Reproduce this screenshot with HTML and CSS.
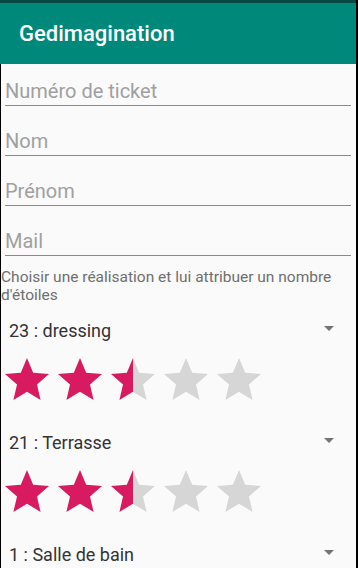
FILE: index.html
```html
<!DOCTYPE html>
<html lang="fr">
<head>
  <meta charset="UTF-8">
  <meta name="viewport" content="width=device-width, initial-scale=1.0">
  <title>Gedimagination</title>
  <link rel="stylesheet" href="styles.css">
</head>
<body>

  <div class="app">
    <!-- Barre du haut -->
    <div class="toolbar">
      <h1>Gedimagination</h1>
    </div>

    <div class="content">
      <!-- Champs du formulaire -->
      <input class="field" type="text" placeholder="Numéro de ticket">
      <input class="field" type="text" placeholder="Nom">
      <input class="field" type="text" placeholder="Prénom">
      <input class="field" type="email" placeholder="Mail">

      <p class="caption">Choisir une réalisation et lui attribuer un nombre d'étoiles</p>

      <svg width="0" height="0" class="defs">
        <defs>
          <linearGradient id="half">
            <stop offset="50%" stop-color="#d81b60"/>
            <stop offset="50%" stop-color="#d6d6d6"/>
          </linearGradient>
          <path id="star" d="M12 17.27L18.18 21l-1.64-7.03L22 9.24l-7.19-.61L12 2 9.19 8.63 2 9.24l5.46 4.73L5.82 21z"/>
        </defs>
      </svg>

      <!-- Réalisation 1 -->
      <div class="spinner">
        <span>23 : dressing</span>
        <span class="arrow"></span>
      </div>
      <div class="rating">
        <svg viewBox="2 2 20 19" class="on"><use href="#star"/></svg>
        <svg viewBox="2 2 20 19" class="on"><use href="#star"/></svg>
        <svg viewBox="2 2 20 19" class="half"><use href="#star"/></svg>
        <svg viewBox="2 2 20 19"><use href="#star"/></svg>
        <svg viewBox="2 2 20 19"><use href="#star"/></svg>
      </div>

      <!-- Réalisation 2 -->
      <div class="spinner">
        <span>21 : Terrasse</span>
        <span class="arrow"></span>
      </div>
      <div class="rating">
        <svg viewBox="2 2 20 19" class="on"><use href="#star"/></svg>
        <svg viewBox="2 2 20 19" class="on"><use href="#star"/></svg>
        <svg viewBox="2 2 20 19" class="half"><use href="#star"/></svg>
        <svg viewBox="2 2 20 19"><use href="#star"/></svg>
        <svg viewBox="2 2 20 19"><use href="#star"/></svg>
      </div>

      <!-- Réalisation 3 (la suite est hors écran) -->
      <div class="spinner">
        <span>1 : Salle de bain</span>
        <span class="arrow"></span>
      </div>
    </div>
  </div>

</body>
</html>
```

FILE: styles.css
```css
html,
body {
  margin: 0;
  padding: 0;
  background-color: #000;
}

body {
  font-family: 'Roboto', 'Liberation Sans', sans-serif;
  width: 358px;
  height: 568px;
  overflow: hidden;
}

.app {
  width: 356px;
  height: 568px;
  background-color: #fafafa;
  border-right: 2px solid #000;
}

.toolbar {
  height: 61px;
  border-top: 3px solid #064a43;
  background-color: #00897b;
  display: flex;
  align-items: center;
  padding-left: 19px;
}

.toolbar h1 {
  margin: 0;
  color: #fff;
  font-size: 22px;
  font-weight: 500;
  line-height: 26px;
}

.content {
  border-left: 1px solid #000;
  height: 504px;
  overflow: hidden;
}

.field {
  display: block;
  box-sizing: border-box;
  width: 346px;
  height: 42px;
  margin: 0 5px 8px 4px;
  padding: 15px 0 2px 0;
  border: none;
  border-bottom: 1px solid #8a8a8a;
  background: transparent;
  font-family: inherit;
  font-size: 20px;
  line-height: 24px;
  color: #333;
  outline: none;
}

.field::placeholder {
  color: #a0a0a0;
}

.caption {
  margin: 12px 0 0 0;
  font-size: 15.5px;
  line-height: 18px;
  color: #6f6f6f;
}

.defs {
  position: absolute;
}

.spinner {
  height: 46px;
  margin-top: 3px;
  padding: 0 22px 0 8px;
  display: flex;
  align-items: center;
  justify-content: space-between;
  font-size: 18px;
  line-height: 21px;
  color: #333;
}

.arrow {
  width: 0;
  height: 0;
  border-left: 5px solid transparent;
  border-right: 5px solid transparent;
  border-top: 5px solid #757575;
  margin-top: -4px;
}

.rating {
  display: flex;
  gap: 9px;
  padding: 5px 0 0 4px;
  margin-bottom: 19px;
}

.rating + .spinner {
  margin-top: 0;
}

.rating svg {
  width: 44px;
  height: 42px;
  fill: #d6d6d6;
}

.rating svg.on {
  fill: #d81b60;
}

.rating svg.half {
  fill: url(#half);
}
```
